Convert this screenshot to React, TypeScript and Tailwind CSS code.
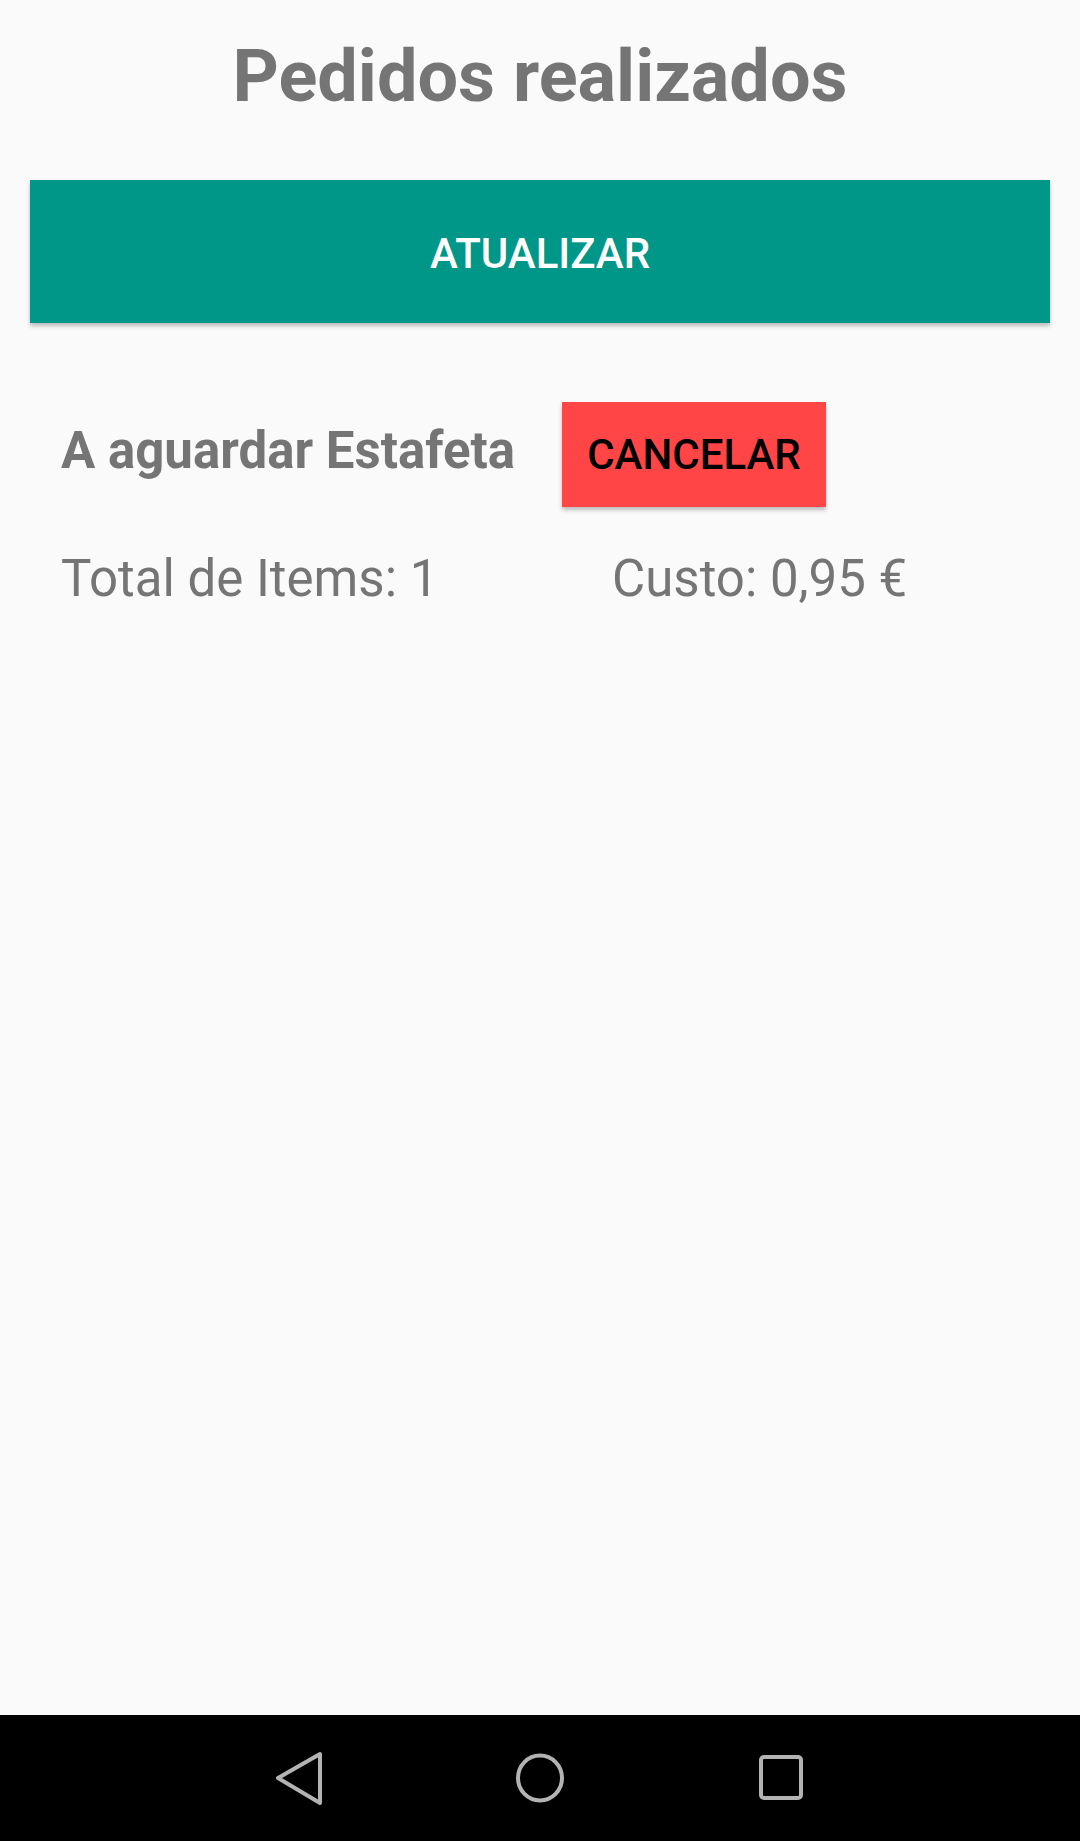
import React from 'react';

const font = { fontFamily: 'Roboto, "Noto Sans", sans-serif' };

function NavBar() {
  return (
    <div className="h-[126px] bg-black flex items-center justify-center">
      {/* Back */}
      <div className="w-[241px] flex justify-center">
        <svg width="56" height="56" viewBox="0 0 56 56" fill="none" stroke="#b3b3b3" strokeWidth="4" strokeLinejoin="round">
          <path d="M7 28 L49 4 L49 53 Z" />
        </svg>
      </div>
      {/* Home */}
      <div className="w-[241px] flex justify-center">
        <svg width="56" height="56" viewBox="0 0 56 56" fill="none" stroke="#b3b3b3" strokeWidth="4">
          <ellipse cx="28" cy="28" rx="22" ry="22.5" />
        </svg>
      </div>
      {/* Recents */}
      <div className="w-[241px] flex justify-center">
        <svg width="56" height="56" viewBox="0 0 56 56" fill="none" stroke="#b3b3b3" strokeWidth="4">
          <rect x="8" y="7" width="40" height="41" rx="3" />
        </svg>
      </div>
    </div>
  );
}

export default function App() {
  return (
    <div className="w-[1080px] h-[1841px] bg-[#fafafa] flex flex-col text-[#757575]" style={font}>
      <div className="flex-1">
        {/* Title */}
        <h1 className="pt-[35px] text-center text-[72px] leading-[84px] font-bold">Pedidos realizados</h1>

        {/* Refresh button */}
        <div className="px-[30px] pt-[61px]">
          <button className="w-full h-[143px] pt-[4px] bg-[#009688] text-white text-[42px] font-medium shadow-[0_3px_4px_rgba(0,0,0,0.25)]">
            ATUALIZAR
          </button>
        </div>

        {/* Order */}
        <div className="pt-[79px] pl-[61px]">
          <div className="flex items-center">
            <span className="w-[501px] mb-[8px] text-[51px] leading-[60px] font-bold">A aguardar Estafeta</span>
            <button className="w-[264px] h-[105px] bg-[#ff4545] text-black text-[42px] font-medium shadow-[0_3px_4px_rgba(0,0,0,0.25)]">
              CANCELAR
            </button>
          </div>
          <div className="flex mt-[42px] text-[51px] leading-[60px]">
            <span className="w-[551px]">Total de Items: 1</span>
            <span>Custo: 0,95 €</span>
          </div>
        </div>
      </div>
      <NavBar />
    </div>
  );
}
